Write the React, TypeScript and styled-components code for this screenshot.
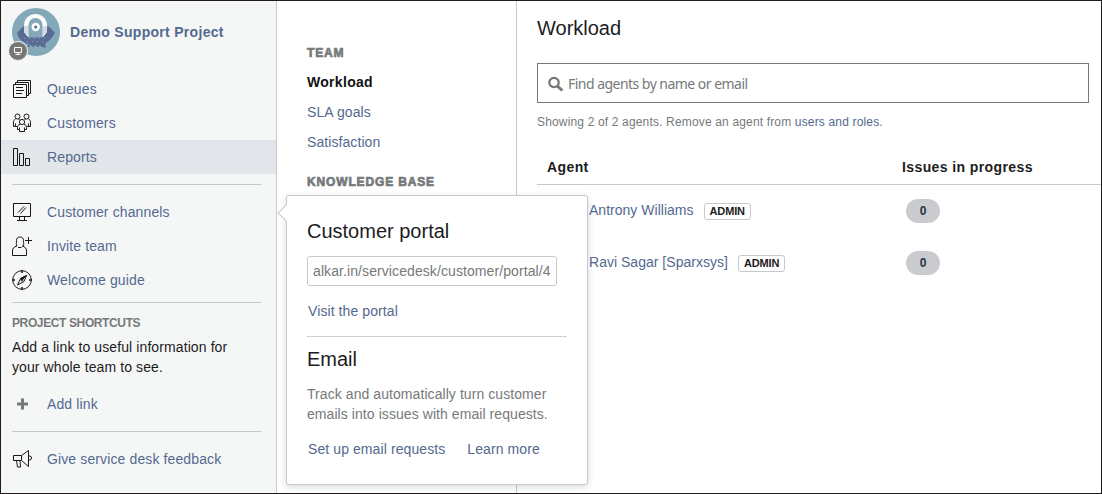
import React from "react";
import styled, { createGlobalStyle } from "styled-components";

const colors = {
  ink: "#1c1c22",
  link: "#54698f",
  muted: "#76797a",
  line: "#c7c9cc",
  sidebar: "#f5f7f7",
  selected: "#e2e5e9",
};

const GlobalStyle = createGlobalStyle`
  * { box-sizing: border-box; }
  body {
    margin: 0;
    overflow: hidden;
    font-family: "Liberation Sans", Arial, sans-serif;
    font-size: 14px;
    line-height: 20px;
    color: ${colors.ink};
    background: #fff;
  }
  h1, h2, h3, p, ul { margin: 0; padding: 0; }
  ul { list-style: none; }
  a { color: ${colors.link}; text-decoration: none; }
`;

const Frame = styled.div`
  position: relative;
  display: flex;
  width: 1102px;
  height: 494px;
  border: 1px solid #1f1b1f;
  overflow: hidden;
`;

const Sidebar = styled.aside`
  width: 276px;
  flex: none;
  display: flex;
  flex-direction: column;
  border-right: 1px solid ${colors.line};
  background-color: ${colors.sidebar};
`;

const ProjectHeader = styled.header`
  display: flex;
  align-items: center;
  gap: 10px;
  height: 71px;
  padding: 0 0 9px 11px;
`;

const Avatar = styled.div`
  position: relative;
  width: 48px;
  height: 48px;
  svg { display: block; }
`;

const TypeBadge = styled.span`
  position: absolute;
  left: -4px;
  top: 33px;
  width: 20px;
  height: 20px;
  border-radius: 50%;
  background: #777776;
  border: 1px solid ${colors.sidebar};
`;

const ProjectName = styled.a`
  font-weight: bold;
  letter-spacing: 0.3px;
`;

const NavRow = styled.a<{ $selected?: boolean }>`
  display: flex;
  align-items: center;
  gap: 15px;
  height: 34px;
  flex: none;
  padding-left: 11px;
  letter-spacing: 0.12px;
  background: ${(p) => (p.$selected ? colors.selected : "transparent")};
`;

const IconBox = styled.svg`
  width: 20px;
  height: 20px;
  flex: none;
  fill: none;
  stroke: #17171a;
  stroke-width: 1;
`;

const Divider = styled.hr<{ $top: number; $bottom: number }>`
  width: 249px;
  height: 1px;
  flex: none;
  border: 0;
  margin: ${(p) => p.$top}px 0 ${(p) => p.$bottom}px 11px;
  background: ${colors.line};
`;

const ShortcutsTitle = styled.h3`
  padding-left: 11px;
  font-size: 12px;
  line-height: 20px;
  letter-spacing: -0.38px;
  color: ${colors.muted};
`;

const ShortcutsText = styled.p`
  width: 250px;
  padding: 4px 0 10px 11px;
  letter-spacing: 0.1px;
`;

const ReportNav = styled.nav`
  width: 240px;
  flex: none;
  padding: 42px 0 0 30px;
  border-right: 1px solid ${colors.line};
`;

const GroupTitle = styled.h3`
  font-size: 12px;
  line-height: 20px;
  font-weight: 900;
  letter-spacing: 0.85px;
  color: ${colors.muted};
  -webkit-text-stroke: 0.7px ${colors.muted};
`;

const GroupList = styled.ul`
  padding: 4px 0 5px;
  margin-bottom: 10px;
`;

const GroupItem = styled.li<{ $active?: boolean }>`
  height: 30px;
  line-height: 30px;
  letter-spacing: ${(p) => (p.$active ? 0.3 : 0.08)}px;
  font-weight: ${(p) => (p.$active ? "bold" : "normal")};
  color: ${(p) => (p.$active ? "#111" : colors.link)};
`;

const Main = styled.main`
  flex: 1;
  padding: 12px 0 0 20px;
`;

const Heading = styled.h2`
  font-size: 20px;
  line-height: 30px;
  font-weight: normal;
`;

const Search = styled.div`
  display: flex;
  align-items: center;
  width: 552px;
  height: 40px;
  margin-top: 20px;
  padding: 2px 0 0 9px;
  gap: 4px;
  border: 1px solid #77797a;
  font-family: "Noto Sans", sans-serif;
  font-size: 14px;
  letter-spacing: -0.53px;
  color: ${colors.muted};
`;

const Summary = styled.p`
  margin-top: 9px;
  font-size: 12px;
  line-height: 20px;
  letter-spacing: 0.16px;
  color: ${colors.muted};
`;

const Table = styled.div`
  margin-top: 21px;
`;

const TableHead = styled.div`
  display: grid;
  grid-template-columns: 355px 1fr;
  height: 32px;
  padding-left: 10px;
  border-bottom: 1px solid ${colors.line};
  line-height: 28px;
  font-weight: bold;
  letter-spacing: 0.4px;
`;

const TableRow = styled.div`
  display: grid;
  grid-template-columns: 317px 1fr;
  align-items: center;
  height: 52px;
  padding-left: 52px;
`;

const AgentCell = styled.div`
  display: flex;
  align-items: center;
  gap: 10px;
  padding-bottom: 2px;
  letter-spacing: 0.02px;
`;

const Lozenge = styled.span`
  height: 17px;
  margin-top: 2px;
  padding: 0 5px;
  border: 1px solid ${colors.line};
  border-radius: 3px;
  font-size: 11px;
  line-height: 15px;
  letter-spacing: -0.15px;
  font-weight: bold;
`;

const Count = styled.span`
  width: 34px;
  height: 24px;
  border-radius: 12px;
  background: #c9cbcf;
  text-align: center;
  font-size: 12px;
  line-height: 24px;
  font-weight: bold;
  color: #2a3342;
`;

const Popover = styled.section`
  position: absolute;
  left: 285px;
  top: 194px;
  width: 302px;
  height: 290px;
  padding: 20px;
  border: 1px solid ${colors.line};
  border-radius: 3px;
  background: #fff;
  box-shadow: 0 2px 6px rgba(60, 70, 95, 0.2);
  &::before {
    content: "";
    position: absolute;
    left: -7px;
    top: 11px;
    width: 11px;
    height: 11px;
    border: solid ${colors.line};
    border-width: 0 0 1px 1px;
    background: #fff;
    transform: rotate(45deg);
  }
`;

const PortalUrl = styled.div`
  width: 250px;
  height: 30px;
  margin-top: 10px;
  padding-left: 5px;
  border: 1px solid ${colors.line};
  border-radius: 3px;
  line-height: 28px;
  letter-spacing: 0.09px;
  color: ${colors.muted};
  white-space: nowrap;
`;

const PopoverActions = styled.div`
  display: flex;
  gap: 22px;
  margin: 15px 0 0 1px;
  letter-spacing: 0.09px;
`;

const PopoverRule = styled.hr`
  height: 1px;
  border: 0;
  margin: 15px 0 7px;
  background: repeating-linear-gradient(90deg, ${colors.line} 0 3px, #e3e4e6 3px 4px);
`;

const PopoverText = styled.p`
  margin-top: 10px;
  white-space: pre-line;
  letter-spacing: 0.07px;
  color: ${colors.muted};
`;

const ProjectAvatar = () => (
  <svg width="48" height="48" viewBox="0 0 48 48">
    <circle cx="24" cy="24" r="24" fill="#83a9b9" />
    <path d="M5 25 11 18.500H37L43 25 38 32 33.500 35V40.500L30 37.500H19L10 33 7 30Z" fill="#5a6b95" />
    <path d="M12 24V17.500a11.500 11.500 0 0 1 23 0V24l-4 5H16Z" fill="#fafbfb" />
    <path d="M12 18h4.500v9.500L12 24zM30.500 18H35v6l-4.500 3.500z" fill="#d3dbe2" />
    <path d="M16.500 29.500V17a7 7 0 0 1 14 0v12.500Z" fill="#83a9b9" />
    <circle cx="23.700" cy="19" r="2.900" fill="#5a6b95" stroke="#fff" strokeWidth="2.600" />
    <path d="M12 30.500h24M15 33.500h20" stroke="#83a9b9" strokeDasharray="1 4" />
    <path d="M16 38h17" stroke="#252b40" strokeDasharray="1.500 3" />
  </svg>
);

const BadgeIcon = () => (
  <svg width="18" height="18" viewBox="0 0 18 18">
    <path d="M5.500 5.500h7v5h-7zM9 11v2M6.500 12.500h5" fill="none" stroke="#fff" />
  </svg>
);

const QueuesIcon = () => (
  <IconBox>
    <path d="M1.500 5.500h13v13h-13zM3.500 5V3.500h13v13H15M5.500 3V1.500h13v13H17M4 8.500h7M4 11.500h8M4 14.500h6" />
  </IconBox>
);

const CustomersIcon = () => (
  <IconBox>
    <circle cx="5.500" cy="3.500" r="2.500" />
    <circle cx="14.500" cy="3.500" r="2.500" />
    <circle cx="10" cy="9" r="2.600" />
    <path d="M3.500 6C2 6.500 1.500 8 1.500 10v3.500h2v-3M3.500 13.500h2M16.500 6c1.500.5 2 2 2 4v3.500h-2v-3M16.500 13.500h-2M7.500 6l-1 1M12.500 6l1 1" />
    <path d="M8 11.500c-2 .3-2.500 1.500-2.500 3v2h2v2h5v-2h2v-2c0-1.500-.5-2.700-2.500-3M7.500 14.500v2M12.500 14.500v2" />
  </IconBox>
);

const ReportsIcon = () => (
  <IconBox>
    <path d="M1.500 1.500h4v17h-4zM7.500 6.500h4v12h-4zM13.500 11.500h4v7h-4z" />
  </IconBox>
);

const ChannelsIcon = () => (
  <IconBox>
    <path d="M1.500 1.500h17v13h-17zM7.500 14.500v4M12.500 14.500v4M5 18.500h10M6 10.500l6-6M8.500 11.500l5.500-6" />
  </IconBox>
);

const InviteIcon = () => (
  <IconBox>
    <path d="M5 10C3.800 8.500 4.500 7 4.500 4.500 4.500 2.500 5.500 1 8 1s3.500 1.500 3.500 3.500c0 2.500.7 4-.5 5.500M5 10c-3 .8-4.500 2-4.500 5v4.500h14V15c0-3-1.500-4.200-4.500-5M6 11.500h3.500" />
    <path d="M16.500 1v7M13 4.500h7" />
  </IconBox>
);

const CompassIcon = () => (
  <IconBox>
    <circle cx="10" cy="10" r="9.300" />
    <path d="M10 0v3M10 17v3M0 10h3M17 10h3" strokeWidth="1.500" />
    <path d="M14.500 5.500 12 11.500 5.500 15 8.500 8.500Z" />
    <path d="M14.500 5.500 8.500 8.500 10 10Z" fill="#17171a" />
    <circle cx="10" cy="10" r="1" />
  </IconBox>
);

const PlusIcon = () => (
  <IconBox>
    <path d="M10.500 4.500v11M5 10h11" stroke="#777979" strokeWidth="3" />
  </IconBox>
);

const MegaphoneIcon = () => (
  <IconBox>
    <path d="M1.500 6.500h8v5h-8zM9.500 6.500l7-5v16l-7-6M16.500 7h1a1.500 1.500 0 0 1 0 4h-1" />
    <path d="M4.500 11.500l1 6.500h3l-.5-6.500" />
  </IconBox>
);

const SearchIcon = () => (
  <svg width="17" height="17" viewBox="0 0 17 17" fill="none" stroke="#747677">
    <circle cx="7" cy="6.500" r="4.700" strokeWidth="2.200" />
    <path d="M10.300 10 15.300 14.500" strokeWidth="3" />
  </svg>
);

const agents = [
  { name: "Antrony Williams", issues: 0 },
  { name: "Ravi Sagar [Sparxsys]", issues: 0 },
];

export default function App() {
  return (
    <>
      <GlobalStyle />
      <Frame>
        <Sidebar>
          <ProjectHeader>
            <Avatar>
              <ProjectAvatar />
              <TypeBadge><BadgeIcon /></TypeBadge>
            </Avatar>
            <ProjectName>Demo Support Project</ProjectName>
          </ProjectHeader>
          <NavRow><QueuesIcon />Queues</NavRow>
          <NavRow><CustomersIcon />Customers</NavRow>
          <NavRow $selected><ReportsIcon />Reports</NavRow>
          <Divider $top={10} $bottom={10} />
          <NavRow><ChannelsIcon />Customer channels</NavRow>
          <NavRow><InviteIcon />Invite team</NavRow>
          <NavRow><CompassIcon />Welcome guide</NavRow>
          <Divider $top={5} $bottom={10} />
          <ShortcutsTitle>PROJECT SHORTCUTS</ShortcutsTitle>
          <ShortcutsText>Add a link to useful information for your whole team to see.</ShortcutsText>
          <NavRow><PlusIcon />Add link</NavRow>
          <Divider $top={10} $bottom={10} />
          <NavRow><MegaphoneIcon />Give service desk feedback</NavRow>
        </Sidebar>
        <ReportNav>
          <GroupTitle>TEAM</GroupTitle>
          <GroupList>
            <GroupItem $active>Workload</GroupItem>
            <GroupItem>SLA goals</GroupItem>
            <GroupItem>Satisfaction</GroupItem>
          </GroupList>
          <GroupTitle>KNOWLEDGE BASE</GroupTitle>
        </ReportNav>
        <Main>
          <Heading>Workload</Heading>
          <Search><SearchIcon />Find agents by name or email</Search>
          <Summary>
            Showing 2 of 2 agents. Remove an agent from <a>users and roles</a>.
          </Summary>
          <Table>
            <TableHead><span>Agent</span><span>Issues in progress</span></TableHead>
            {agents.map((agent) => (
              <TableRow key={agent.name}>
                <AgentCell><a>{agent.name}</a><Lozenge>ADMIN</Lozenge></AgentCell>
                <Count>{agent.issues}</Count>
              </TableRow>
            ))}
          </Table>
        </Main>
        <Popover>
          <Heading>Customer portal</Heading>
          <PortalUrl>alkar.in/servicedesk/customer/portal/4</PortalUrl>
          <PopoverActions><a>Visit the portal</a></PopoverActions>
          <PopoverRule />
          <Heading>Email</Heading>
          <PopoverText>{"Track and automatically turn customer\nemails into issues with email requests."}</PopoverText>
          <PopoverActions><a>Set up email requests</a><a>Learn more</a></PopoverActions>
        </Popover>
      </Frame>
    </>
  );
}
